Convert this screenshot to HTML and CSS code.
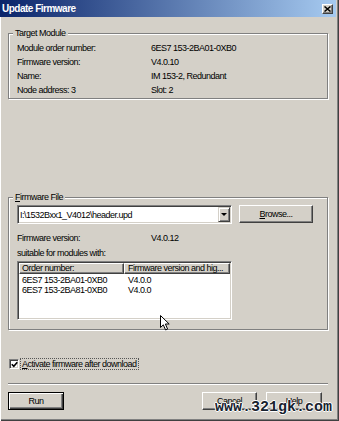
FILE: index.html
```html
<!DOCTYPE html>
<html lang="en">
<head>
    <meta charset="UTF-8">
    <meta name="viewport" content="width=device-width, initial-scale=1.0">
    <title>Update Firmware</title>
    <link rel="stylesheet" href="styles.css">
</head>
<body>
    <div class="window">
        <div class="titlebar">
            <span class="title">Update Firmware</span>
            <span class="close-btn">
                <svg width="7" height="6" viewBox="0 0 7 6"><path d="M0.5 0.5L6.5 5.5M6.5 0.5L0.5 5.5" stroke="#000" stroke-width="1.5"/></svg>
            </span>
        </div>

        <div class="dialog">
            <fieldset class="group group-target">
                <legend>Target Module</legend>
                <div class="info-grid">
                    <span>Module order number:</span><span>6ES7 153-2BA01-0XB0</span>
                    <span>Firmware version:</span><span>V4.0.10</span>
                    <span>Name:</span><span>IM 153-2, Redundant</span>
                    <span>Node address: 3</span><span>Slot: 2</span>
                </div>
            </fieldset>

            <fieldset class="group group-file">
                <legend><u>F</u>irmware File</legend>
                <div class="file-row">
                    <div class="combo">
                        <span class="combo-text">I:\1532Bxx1_V4012\header.upd</span>
                        <span class="combo-arrow"></span>
                    </div>
                    <button class="btn btn-browse"><u>B</u>rowse...</button>
                </div>
                <div class="info-grid fw-version">
                    <span>Firmware version:</span><span>V4.0.12</span>
                </div>
                <div class="suitable">suitable for modules with:</div>
                <div class="listview">
                    <div class="list-head">
                        <span class="col-order">Order number:</span>
                        <span class="col-fw">Firmware version and hig...</span>
                    </div>
                    <div class="list-row">
                        <span class="col-order">6ES7 153-2BA01-0XB0</span>
                        <span class="col-fw">V4.0.0</span>
                    </div>
                    <div class="list-row">
                        <span class="col-order">6ES7 153-2BA81-0XB0</span>
                        <span class="col-fw">V4.0.0</span>
                    </div>
                </div>
            </fieldset>

            <div class="check-row">
                <span class="checkbox">
                    <svg width="7" height="7" viewBox="0 0 7 7"><path d="M0.8 3.2L2.8 5.3L6.3 1.2" fill="none" stroke="#000" stroke-width="1.6"/></svg>
                </span>
                <span class="check-label"><u>A</u>ctivate firmware after download</span>
            </div>

            <div class="separator"></div>

            <div class="button-row">
                <button class="btn btn-default btn-run">Run</button>
                <button class="btn btn-cancel">Cancel</button>
                <button class="btn btn-help">Help</button>
            </div>
        </div>

        <!-- mouse pointer left in the screenshot -->
        <svg class="cursor" width="10" height="16" viewBox="0 0 10 16">
            <path d="M0.5 0.5V12.5L3.3 9.8L5.6 15L7.6 14.1L5.4 9H9.2Z" fill="#fff" stroke="#000" stroke-width="1"/>
        </svg>

        <div class="watermark">www.321gk.com</div>
    </div>
</body>
</html>
```

FILE: styles.css
```css
/* Classic Windows dialog */
body {
    margin: 0;
    background: #d4d0c8;
    color: #000;
    font-family: "Liberation Sans", Arial, sans-serif;
    font-size: 9px;
    letter-spacing: -0.5px;
}

.window {
    position: relative;
    width: 339px;
    height: 421px;
    box-sizing: border-box;
    background: #d4d0c8;
    box-shadow: inset 1px 0 #fff, inset -1px -1px #404040, inset -2px -2px #808080;
    overflow: hidden;
}

/* Title bar */
.titlebar {
    display: flex;
    align-items: center;
    justify-content: space-between;
    height: 17px;
    margin-right: 3px;
    padding: 0 3px 0 2px;
    background: linear-gradient(to right, #0a246a, #a6caf0);
}

.title {
    color: #fff;
    font-weight: bold;
    font-size: 10px;
    letter-spacing: -0.5px;
}

.close-btn {
    display: flex;
    align-items: center;
    justify-content: center;
    width: 11px;
    height: 10px;
    margin-top: 1px;
    box-sizing: border-box;
    background: #d4d0c8;
    border: 1px solid;
    border-color: #fff #404040 #404040 #fff;
    box-shadow: inset -1px -1px #808080;
}

/* Dialog body */
.dialog {
    display: flex;
    flex-direction: column;
    padding: 0 11px 0 8px;
}

.group {
    margin: 0;
    padding: 2px 0 0 8px;
    min-width: 0;
    border: 1px solid #808080;
    box-shadow: inset 1px 1px #fff, 1px 1px #fff;
}

.group legend {
    margin-left: -4px;
    padding: 0 2px;
    line-height: 12px;
    background: #d4d0c8;
}

.group-target {
    margin-top: 10px;
    padding-bottom: 1px;
}

.group-file {
    margin-top: 92px;
    padding-bottom: 9px;
}

.info-grid {
    display: grid;
    grid-template-columns: 134px auto;
    line-height: 14px;
}

/* Firmware file picker */
.file-row {
    display: flex;
    align-items: flex-start;
    height: 19px;
}

.combo {
    display: flex;
    align-items: center;
    width: 215px;
    height: 19px;
    box-sizing: border-box;
    padding: 1px 1px 1px 2px;
    background: #fff;
    border: 1px solid;
    border-color: #808080 #fff #fff #808080;
    box-shadow: inset 1px 1px #404040, inset -1px -1px #d4d0c8;
}

.combo-text {
    flex: 1;
}

.combo-arrow {
    display: flex;
    align-items: center;
    justify-content: center;
    width: 12px;
    height: 15px;
    box-sizing: border-box;
    background: #d4d0c8;
    border: 1px solid;
    border-color: #d4d0c8 #404040 #404040 #d4d0c8;
    box-shadow: inset 1px 1px #fff, inset -1px -1px #808080;
}

.combo-arrow::after {
    content: "";
    border-left: 3px solid transparent;
    border-right: 3px solid transparent;
    border-top: 3px solid #000;
}

/* Buttons */
.btn {
    height: 18px;
    padding: 0;
    font: inherit;
    letter-spacing: inherit;
    color: #000;
    background: #d4d0c8;
    border: 1px solid;
    border-color: #fff #404040 #404040 #fff;
    box-shadow: inset -1px -1px #808080, inset 1px 1px #d4d0c8;
}

.btn-default {
    border-color: #000;
    box-shadow: inset 1px 1px #fff, inset -1px -1px #404040, inset -2px -2px #808080;
}

.btn-browse {
    width: 74px;
    margin-left: 7px;
}

.fw-version {
    margin-top: 7px;
}

.suitable {
    margin-top: 1px;
    line-height: 14px;
}

/* List of modules */
.listview {
    width: 215px;
    height: 59px;
    margin-top: 1px;
    box-sizing: border-box;
    padding: 1px;
    background: #fff;
    border: 1px solid;
    border-color: #808080 #fff #fff #808080;
    box-shadow: inset 1px 1px #404040, inset -1px -1px #d4d0c8;
}

.list-head {
    display: flex;
    height: 11px;
    margin-bottom: 1px;
    line-height: 9px;
}

.list-head span {
    box-sizing: border-box;
    background: #d4d0c8;
    border: 1px solid;
    border-color: #fff #404040 #404040 #fff;
    box-shadow: inset -1px -1px #808080;
}

.list-head .col-order {
    width: 105px;
    padding-left: 2px;
}

.list-head .col-fw {
    flex: 1;
    padding-left: 3px;
}

.list-row {
    display: flex;
    line-height: 10px;
}

.list-row .col-order {
    width: 105px;
    padding-left: 3px;
    box-sizing: border-box;
}

.list-row .col-fw {
    padding-left: 4px;
}

/* Checkbox */
.check-row {
    display: flex;
    align-items: center;
    height: 12px;
    margin-top: 28px;
}

.checkbox {
    display: flex;
    align-items: center;
    justify-content: center;
    width: 10px;
    height: 10px;
    margin-left: 1px;
    box-sizing: border-box;
    background: #fff;
    border: 1px solid;
    border-color: #808080 #fff #fff #808080;
    box-shadow: inset 1px 1px #404040, inset -1px -1px #d4d0c8;
}

.check-label {
    margin-left: 1px;
    padding: 0 1px;
    line-height: 10px;
    border: 1px dotted #555;
}

.separator {
    margin-top: 13px;
    border-top: 1px solid #808080;
    border-bottom: 1px solid #fff;
}

.button-row {
    display: flex;
    gap: 9px;
    margin-top: 7px;
    padding-right: 6px;
}

.btn-run {
    width: 56px;
    margin-right: auto;
}

.btn-cancel {
    width: 55px;
}

.btn-help {
    width: 56px;
}

/* Overlays */
.cursor {
    position: absolute;
    left: 160px;
    top: 315px;
}

.watermark {
    position: absolute;
    left: 215px;
    top: 399px;
    font-family: "Liberation Mono", "Courier New", monospace;
    font-size: 15px;
    font-weight: bold;
    line-height: 17px;
    letter-spacing: 0;
    color: #18222e;
    text-shadow: 1px 0 #fff, -1px 0 #fff, 0 1px #fff, 0 -1px #fff;
}
```
